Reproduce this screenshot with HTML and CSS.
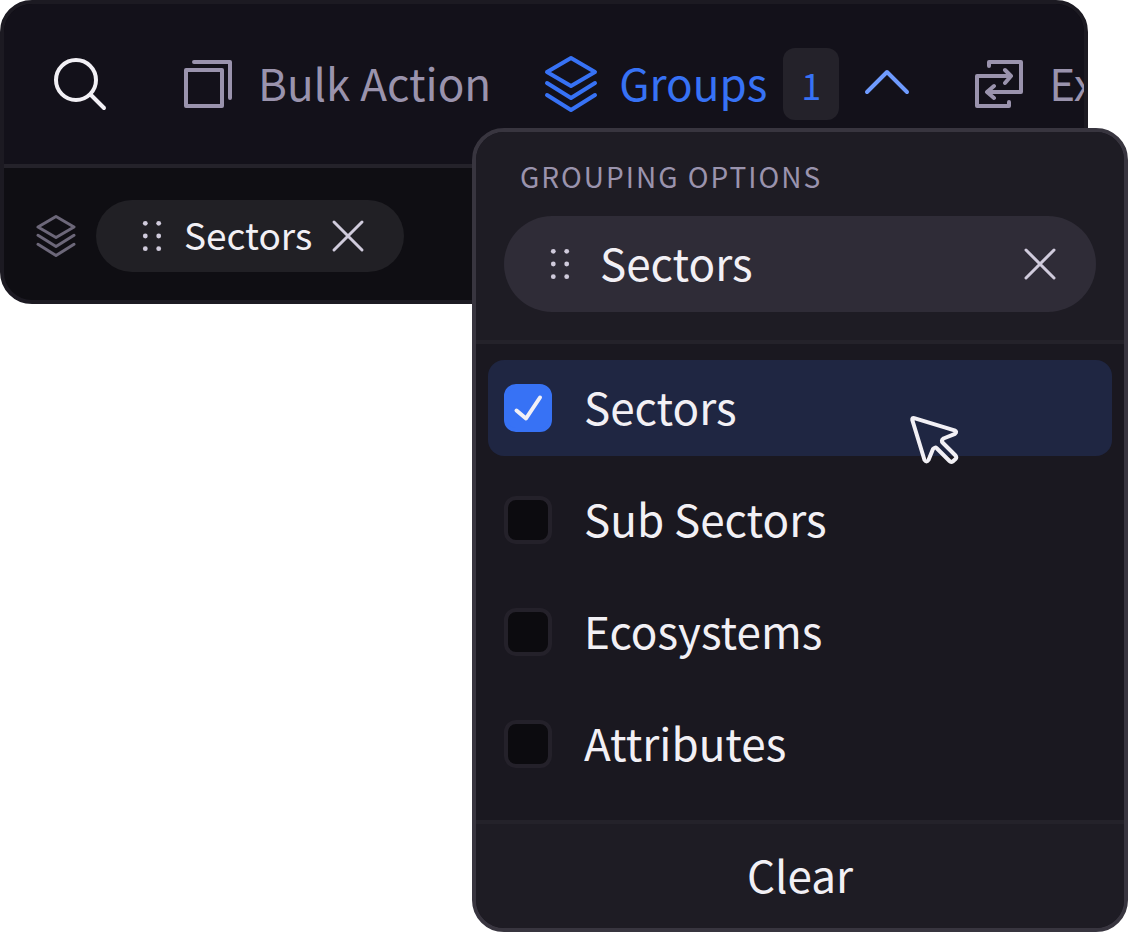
FILE: index.html
```html
<!DOCTYPE html>
<html lang="en">

<head>
  <meta charset="UTF-8">
  <meta name="viewport" content="width=device-width, initial-scale=1.0">
  <title>Grouping options</title>
  <link rel="stylesheet" href="styles.css">
</head>

<body>
  <svg width="0" height="0" class="sprite" aria-hidden="true">
    <symbol id="layers" viewBox="0 0 64 64">
      <path d="M32 6L56 20L32 34L8 20ZM8 31L32 46L56 31M8 43L32 58L56 43" />
    </symbol>
    <symbol id="close" viewBox="0 0 48 48">
      <path d="M10 10L38 38M38 10L10 38" />
    </symbol>
    <symbol id="grip" viewBox="0 0 48 48">
      <circle cx="17.3" cy="11.3" r="2.4" />
      <circle cx="30.7" cy="11.3" r="2.4" />
      <circle cx="17.3" cy="24" r="2.4" />
      <circle cx="30.7" cy="24" r="2.4" />
      <circle cx="17.3" cy="36.7" r="2.4" />
      <circle cx="30.7" cy="36.7" r="2.4" />
    </symbol>
    <symbol id="check" viewBox="0 0 48 48">
      <path d="M12.500 26.500L22 34.500L36 13.500" />
    </symbol>
  </svg>

  <main class="stage">
    <section class="panel">
      <div class="toolbar">
        <button class="tool search" type="button" aria-label="Search">
          <svg class="icon" viewBox="0 0 64 64">
            <circle cx="28" cy="28" r="20" />
            <path d="M43 43L56 56" />
          </svg>
        </button>
        <button class="tool" type="button">
          <svg class="icon" viewBox="0 0 64 64">
            <path d="M10 18H46V54H10ZM18 10H54V46" />
          </svg>
          <span class="text">Bulk Action</span>
        </button>
        <button class="tool active" type="button" aria-expanded="true">
          <svg class="icon"><use href="#layers" /></svg>
          <span class="text">Groups</span>
          <span class="badge">1</span>
          <svg class="icon chevron" viewBox="0 0 64 64">
            <path d="M12 40L32 20L52 40" />
          </svg>
        </button>
        <button class="tool" type="button">
          <svg class="icon" viewBox="0 0 64 64">
            <path d="M22 14V10H54V40H21M27 34L20 40L27 46M42 50V54H10V24H43M38 18L44 24L38 31" />
          </svg>
          <span class="text">Export</span>
        </button>
      </div>
      <div class="applied">
        <svg class="icon small layers"><use href="#layers" /></svg>
        <div class="chip">
          <svg class="icon small grip"><use href="#grip" /></svg>
          <span class="text">Sectors</span>
          <button class="close" type="button" aria-label="Remove Sectors">
            <svg class="icon small"><use href="#close" /></svg>
          </button>
        </div>
      </div>
    </section>

    <section class="menu">
      <header class="menu-header">
        <h2>GROUPING OPTIONS</h2>
        <div class="pill">
          <svg class="icon small grip"><use href="#grip" /></svg>
          <span class="text">Sectors</span>
          <button class="close" type="button" aria-label="Remove Sectors">
            <svg class="icon small"><use href="#close" /></svg>
          </button>
        </div>
      </header>
      <div class="options">
        <label class="option selected">
          <span class="box">
            <input type="checkbox" checked>
            <svg class="icon small"><use href="#check" /></svg>
          </span>
          <span class="text">Sectors</span>
          <svg class="icon cursor" viewBox="0 0 64 64">
            <path d="M10.2 10.1L50.5 22.3Q53.5 23.6 51 25.8L39.5 30.5Q36.5 32.5 39 35L51.5 47.5Q53 49.5 51.5 51L49 53.3Q47 54.5 45.5 53L33 40.5Q31 38.5 29 41L24.5 52Q22.5 55 20.5 52L8.3 12Q8 9.5 10.2 10.1Z" />
          </svg>
        </label>
        <label class="option">
          <span class="box"><input type="checkbox"></span>
          <span class="text">Sub Sectors</span>
        </label>
        <label class="option">
          <span class="box"><input type="checkbox"></span>
          <span class="text">Ecosystems</span>
        </label>
        <label class="option">
          <span class="box"><input type="checkbox"></span>
          <span class="text">Attributes</span>
        </label>
      </div>
      <button class="clear" type="button">Clear</button>
    </section>
  </main>
</body>

</html>
```
FILE: styles.css
```css
* {
  box-sizing: border-box;
  padding: 0;
  margin: 0;
}

body {
  background-color: #fff;
  color: #f2f0f5;
  font-family: "Noto Sans CJK SC", "Noto Sans", sans-serif;
  font-size: 44px;
  line-height: 64px;
}

button {
  border: none;
  background: none;
  color: inherit;
  font: inherit;
  cursor: pointer;
}

.sprite {
  position: absolute;
}

.icon {
  display: block;
  flex: none;
  width: 64px;
  height: 64px;
  fill: none;
  stroke: currentColor;
  stroke-width: 4;
  stroke-linecap: round;
  stroke-linejoin: round;
}

.icon.small {
  width: 48px;
  height: 48px;
}

/* the font sits low in its line */
.text {
  padding-bottom: 4px;
}

/* the menu shares the panel's cell and hangs over it */
.stage {
  display: grid;
  align-items: start;
}

.stage > * {
  grid-area: 1 / 1;
}

/* toolbar */
.panel {
  min-width: 0;
  margin-right: 40px;
  border: 4px solid #1c1a22;
  border-radius: 32px;
  background-color: #0f0e13;
  overflow: hidden;
}

.toolbar {
  display: flex;
  align-items: center;
  gap: 48px;
  padding: 44px 0 44px 44px;
  border-bottom: 4px solid #24222a;
  background-color: #13111a;
}

.tool {
  display: flex;
  flex: none;
  align-items: center;
  gap: 18px;
  height: 72px;
  color: #9a93ad;
  white-space: nowrap;
}

.tool.search {
  margin-right: 16px;
  color: #f2f0f5;
}

.tool.active {
  gap: 16px;
  color: #3772f5;
}

.badge {
  width: 56px;
  border-radius: 12px;
  background-color: #24222a;
  font-size: 36px;
  line-height: 72px;
  text-align: center;
}

.chevron {
  color: #6f9bff;
}

.applied {
  display: flex;
  align-items: center;
  gap: 16px;
  padding: 32px 28px 28px;
}

.layers {
  color: #6c6779;
}

.chip,
.pill {
  display: flex;
  align-items: center;
  padding: 0 32px;
  border-radius: 48px;
}

.chip {
  gap: 8px;
  height: 72px;
  background-color: #212025;
  font-size: 37px;
}

.grip {
  fill: #d0cbdc;
  stroke: none;
}

.close {
  color: #d0cbdc;
}

.close .icon {
  stroke-width: 3;
}

.chip .close {
  margin-left: 4px;
}

/* dropdown */
.menu {
  justify-self: end;
  width: 656px;
  max-width: 100%;
  margin-top: 128px;
  border: 4px solid #38353f;
  border-radius: 32px;
  background-color: #1a1820;
  overflow: hidden;
  z-index: 1;
}

.menu-header {
  padding: 28px;
  border-bottom: 4px solid #24222a;
  background-color: #1e1c24;
}

.menu-header h2 {
  margin-bottom: 24px;
  padding-left: 16px;
  color: #9a93ad;
  font-size: 28px;
  font-weight: 400;
  letter-spacing: 2px;
  line-height: 32px;
}

.pill {
  gap: 16px;
  height: 96px;
  background-color: #2f2c37;
}

.pill .close {
  margin-left: auto;
}

.options {
  display: flex;
  flex-direction: column;
  gap: 16px;
  padding: 16px 12px 28px;
}

.option {
  position: relative;
  display: flex;
  align-items: center;
  gap: 32px;
  height: 96px;
  padding: 0 16px;
  border-radius: 16px;
  cursor: pointer;
}

.option.selected {
  background-color: #1f2642;
}

.box {
  display: grid;
}

.box > * {
  grid-area: 1 / 1;
}

.box input {
  appearance: none;
  width: 48px;
  height: 48px;
  border: 4px solid #24212a;
  border-radius: 12px;
  background-color: #0c0b0f;
}

.box input:checked {
  border-color: #3772f5;
  background-color: #3772f5;
}

.cursor {
  position: absolute;
  top: 48px;
  right: 144px;
}

.clear {
  display: block;
  width: 100%;
  height: 108px;
  padding-bottom: 4px;
  border-top: 4px solid #24222a;
  background-color: #1e1c24;
}
```
